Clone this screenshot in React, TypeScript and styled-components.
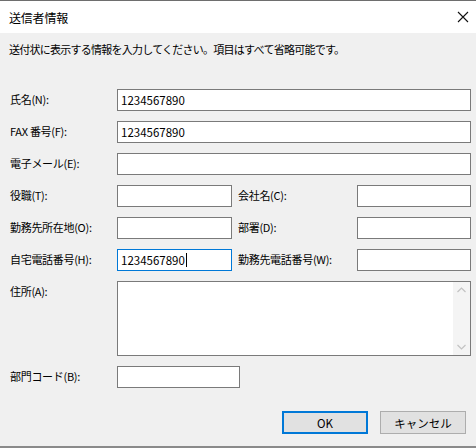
import React from 'react';
import styled, { createGlobalStyle } from 'styled-components';

const Global = createGlobalStyle`
  html, body { margin: 0; padding: 0; background: #f0f0f0; }
  body {
    font-family: "Noto Sans CJK JP", "Noto Sans", sans-serif;
    font-size: 11px;
    color: #000;
  }
`;

const Window = styled.div`
  width: 476px;
  height: 448px;
  box-sizing: border-box;
  border-top: 1px solid #6e6e6e;
  border-bottom: 2px solid #8a8a8a;
  background: #f0f0f0;
  display: flex;
  flex-direction: column;
`;

const TitleBar = styled.div`
  height: 32px;
  background: #fff;
  display: flex;
  align-items: center;
  justify-content: space-between;
  padding: 0 6px 0 9px;
  flex-shrink: 0;
`;

const Title = styled.span`
  font-size: 12px;
  letter-spacing: -0.2px;
`;

const Close = styled.div`
  width: 14px;
  height: 14px;
  flex-shrink: 0;
  display: flex;
  align-items: center;
  justify-content: center;
`;

const Body = styled.div`
  flex: 1;
  display: flex;
  flex-direction: column;
  padding: 7px 5px 0 10px;
`;

const Intro = styled.div`
  height: 18px;
  line-height: 18px;
  letter-spacing: -0.75px;
  margin-left: -1px;
`;

const Form = styled.div`
  display: grid;
  grid-template-columns: 107px 115px 125px 114px;
  row-gap: 10px;
  margin-top: 31px;
`;

const Label = styled.label<{ $inset?: boolean }>`
  height: 22px;
  line-height: 20px;
  padding-left: ${(p) => (p.$inset ? '6px' : '0')};
  white-space: nowrap;
  letter-spacing: -0.3px;
`;

const Field = styled.div<{ $span?: number; $width?: number; $focused?: boolean }>`
  grid-column: ${(p) => (p.$span ? `span ${p.$span}` : 'span 1')};
  width: ${(p) => (p.$width ? `${p.$width}px` : 'auto')};
  height: 22px;
  box-sizing: border-box;
  background: #fff;
  border: 1px solid ${(p) => (p.$focused ? '#0078d7' : '#7a7a7a')};
  padding: 0 3px;
  display: flex;
  align-items: center;
  font-size: 11.5px;
`;

const Caret = styled.span`
  display: inline-block;
  width: 1px;
  height: 14px;
  background: #000;
  margin-left: 1px;
`;

const AreaLabel = styled(Label)`
  height: 74px;
`;

const TextArea = styled.div`
  grid-column: span 3;
  height: 75px;
  box-sizing: border-box;
  background: #fff;
  border: 1px solid #7a7a7a;
  display: flex;
  justify-content: flex-end;
`;

const ScrollBar = styled.div`
  width: 17px;
  background: #f4f4f4;
  display: flex;
  flex-direction: column;
  justify-content: space-between;
  align-items: center;
  padding: 5px 0;
`;

const Footer = styled.div`
  display: flex;
  justify-content: flex-end;
  gap: 12px;
  margin-top: 23px;
  padding-right: 5px;
`;

const Button = styled.button<{ $primary?: boolean }>`
  width: 86px;
  height: 23px;
  box-sizing: border-box;
  background: #e1e1e1;
  border: ${(p) => (p.$primary ? '2px solid #0078d7' : '1px solid #adadad')};
  font-family: inherit;
  font-size: 11.5px;
  color: #000;
  padding: 0;
`;

const Chevron = ({ up }: { up?: boolean }) => (
  <svg width="9" height="6" viewBox="0 0 9 6">
    <path
      d={up ? 'M0.5 5 L4.5 1 L8.5 5' : 'M0.5 1 L4.5 5 L8.5 1'}
      fill="none"
      stroke="#c2c2c2"
      strokeWidth="1.2"
    />
  </svg>
);

export default function App() {
  return (
    <>
      <Global />
      <Window>
        <TitleBar>
          <Title>送信者情報</Title>
          <Close>
            <svg width="12" height="12" viewBox="0 0 12 12">
              <path d="M1 1 L11 11 M11 1 L1 11" fill="none" stroke="#111" strokeWidth="1.1" />
            </svg>
          </Close>
        </TitleBar>
        <Body>
          <Intro>送付状に表示する情報を入力してください。項目はすべて省略可能です。</Intro>
          <Form>
            <Label>氏名(N):</Label>
            <Field $span={3}>1234567890</Field>

            <Label>FAX 番号(F):</Label>
            <Field $span={3}>1234567890</Field>

            <Label>電子メール(E):</Label>
            <Field $span={3} />

            <Label>役職(T):</Label>
            <Field />
            <Label $inset>会社名(C):</Label>
            <Field />

            <Label>勤務先所在地(O):</Label>
            <Field />
            <Label $inset>部署(D):</Label>
            <Field />

            <Label>自宅電話番号(H):</Label>
            <Field $focused>
              1234567890
              <Caret />
            </Field>
            <Label $inset>勤務先電話番号(W):</Label>
            <Field />

            <AreaLabel>住所(A):</AreaLabel>
            <TextArea>
              <ScrollBar>
                <Chevron up />
                <Chevron />
              </ScrollBar>
            </TextArea>

            <Label>部門コード(B):</Label>
            <Field $span={2} $width={123} />
          </Form>
          <Footer>
            <Button $primary>OK</Button>
            <Button>キャンセル</Button>
          </Footer>
        </Body>
      </Window>
    </>
  );
}
